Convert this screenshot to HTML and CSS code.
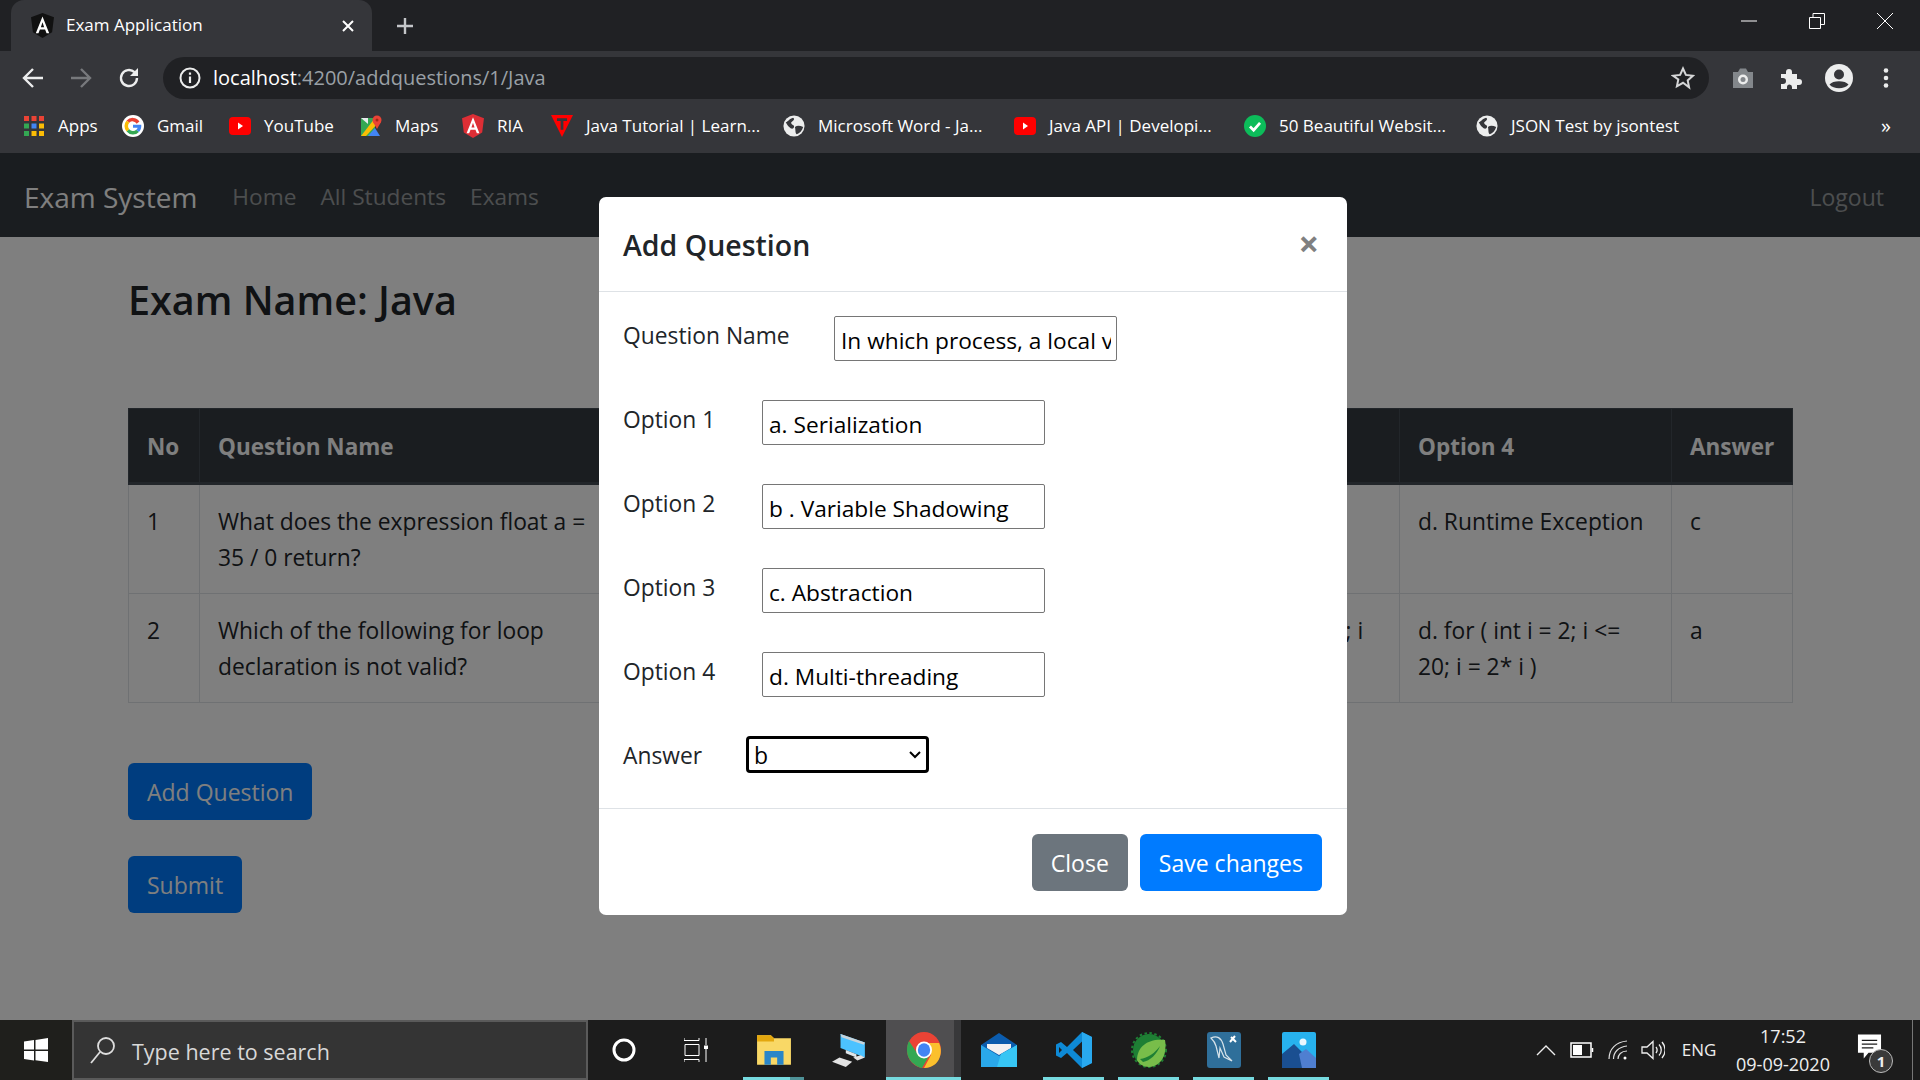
FILE: index.html
```html
<!DOCTYPE html>
<html lang="en">
<head>
  <meta charset="UTF-8">
  <title>Exam Application</title>
  <link rel="stylesheet" href="styles.css">
</head>
<body>

  <svg class="defs" width="0" height="0">
    <symbol id="globe" viewBox="0 0 24 24">
      <circle cx="12" cy="12" r="11.5" fill="#eceded"/>
      <path d="M3 8c3-1 4-4 8-5 2 1 1 3-1 4s-1 3 1 4 1 4-1 4-5-3-7-7zM13 13c3-2 6-1 9 0-1 4-4 7-7 8-2-2-1-4-2-8z" fill="#35363a"/>
    </symbol>
    <symbol id="youtube" viewBox="0 0 22 20">
      <rect x="0" y="1" width="22" height="18" rx="4" fill="#f00"/>
      <path d="M9 6.5l5 3.5-5 3.5z" fill="#fff"/>
    </symbol>
  </svg>

  <div class="browser">
    <div class="tabstrip">
      <div class="tab">
        <svg class="favicon" viewBox="0 0 24 26">
          <path d="M12 0L0 4.500l2 15.500L12 26l10-6 2-15.500z" fill="#111"/>
          <path d="M12 3.500L5 21h2.800l1.500-3.800h5.400l1.500 3.800H19zm-1.700 11.200L12 9.500l1.700 5.200z" fill="#fff"/>
        </svg>
        <span class="tab-title">Exam Application</span>
        <svg class="tab-close" viewBox="0 0 14 14"><path d="M2 2l10 10M12 2L2 12" stroke="#fff" stroke-width="2"/></svg>
      </div>
      <svg class="new-tab" viewBox="0 0 20 20"><path d="M10 2v16M2 10h16" stroke="#c4c6c9" stroke-width="2.4"/></svg>
      <div class="window-btns">
        <svg viewBox="0 0 16 16"><path d="M0 8h16" stroke="#fff" stroke-width="1"/></svg>
        <svg viewBox="0 0 16 16"><path d="M.5 4.500h11v11H.5zM4 4.500V.5h11.500v11H11.500" fill="none" stroke="#fff"/></svg>
        <svg viewBox="0 0 16 16"><path d="M0 0l16 16M16 0L0 16" stroke="#fff"/></svg>
      </div>
    </div>

    <div class="toolbar">
      <svg class="tool" viewBox="0 0 24 24"><path d="M22 12H4M12 3l-9 9 9 9" fill="none" stroke="#eceded" stroke-width="2.400"/></svg>
      <svg class="tool" viewBox="0 0 24 24"><path d="M2 12h18M12 3l9 9-9 9" fill="none" stroke="#77797c" stroke-width="2.400"/></svg>
      <svg class="tool" viewBox="0 0 24 24"><path d="M20 12a8 8 0 1 1-2.500-5.800" fill="none" stroke="#eceded" stroke-width="2.400"/><path d="M21 2v8h-8z" fill="#eceded"/></svg>
      <div class="omnibox">
        <svg class="info" viewBox="0 0 22 22"><circle cx="11" cy="11" r="9.500" fill="none" stroke="#eceded" stroke-width="2"/><path d="M11 9.500v6.500M11 5.500v2.300" stroke="#eceded" stroke-width="2.200"/></svg>
        <span class="url"><span class="host">localhost</span>:4200/addquestions/1/Java</span>
        <svg class="star" viewBox="0 0 24 24"><path d="M12 2.500l2.900 6.400 7 .8-5.200 4.700 1.400 6.900L12 16.800l-6.100 3.500 1.400-6.900L2.100 9.700l7-.8z" fill="none" stroke="#d5d6d7" stroke-width="2"/></svg>
      </div>
      <svg class="ext" viewBox="0 0 24 24"><path d="M2 6h5l2-3.500h6L17 6h5v16H2z" fill="#83878b"/><circle cx="12" cy="13.500" r="5" fill="#eceded"/><circle cx="12" cy="13.500" r="2.500" fill="#83878b"/></svg>
      <svg class="ext" viewBox="0 0 24 24"><path d="M3 8h5V6a3 3 0 0 1 6 0v2h5v5h2a3 3 0 0 1 0 6h-2v4h-5v-2a2.500 2.500 0 0 0-5 0v2H3v-5h2a3 3 0 0 0 0-6H3z" fill="#eceded"/></svg>
      <svg class="ext avatar" viewBox="0 0 28 28"><circle cx="14" cy="14" r="14" fill="#eceded"/><circle cx="14" cy="10.500" r="5" fill="#35363a"/><path d="M4.500 20.500c3-4.500 16-4.500 19 0-4 5-15 5-19 0z" fill="#35363a"/></svg>
      <svg class="ext dots" viewBox="0 0 24 24"><circle cx="12" cy="4.500" r="2.300" fill="#eceded"/><circle cx="12" cy="12" r="2.300" fill="#eceded"/><circle cx="12" cy="19.500" r="2.300" fill="#eceded"/></svg>
    </div>

    <div class="bookmarks">
      <div class="bookmark">
        <svg class="bm-icon" viewBox="0 0 20 24">
          <path d="M0 2h5v5H0z" fill="#ea4335"/><path d="M7.500 2h5v5h-5z" fill="#ea4335"/><path d="M15 2h5v5h-5z" fill="#ea4335"/>
          <path d="M0 9.500h5v5H0z" fill="#34a853"/><path d="M7.500 9.500h5v5h-5z" fill="#4285f4"/><path d="M15 9.500h5v5h-5z" fill="#fbbc05"/>
          <path d="M0 17h5v5H0z" fill="#34a853"/><path d="M7.500 17h5v5h-5z" fill="#fbbc05"/><path d="M15 17h5v5h-5z" fill="#fbbc05"/>
        </svg>
        <span>Apps</span>
      </div>
      <div class="bookmark">
        <svg class="bm-icon" viewBox="0 0 24 24">
          <circle cx="12" cy="12" r="12" fill="#fff"/>
          <path d="M19 7a9 9 0 0 0-14-1l3 2.500a5 5 0 0 1 8 1z" fill="#ea4335"/>
          <path d="M5 6a9 9 0 0 0 0 12l3-2.500a5 5 0 0 1 0-7z" fill="#fbbc05"/>
          <path d="M5 18a9 9 0 0 0 13.500.5L15.500 16A5 5 0 0 1 8 15.500z" fill="#34a853"/>
          <path d="M12 10.500h9c.4 3-.6 6-2.500 8L15.500 16c1-.7 1.300-1.500 1.500-2.200h-5z" fill="#4285f4"/>
        </svg>
        <span>Gmail</span>
      </div>
      <div class="bookmark"><svg class="bm-icon" viewBox="0 0 22 20"><use href="#youtube"/></svg><span>YouTube</span></div>
      <div class="bookmark">
        <svg class="bm-icon" viewBox="0 0 22 24">
          <path d="M1 4h14v18H1z" fill="#34a853"/>
          <path d="M1 22l14-18h4v4L6 22z" fill="#fbbc05"/>
          <path d="M8 22l7-8 5 8z" fill="#4285f4"/>
          <path d="M1 4h7v6z" fill="#e8eaed"/>
          <circle cx="17" cy="6" r="4.500" fill="#ea4335"/>
          <path d="M13 8l4 7 4-7z" fill="#ea4335"/>
          <circle cx="17" cy="6" r="1.500" fill="#a52714"/>
        </svg>
        <span>Maps</span>
      </div>
      <div class="bookmark">
        <svg class="bm-icon" viewBox="0 0 24 26">
          <path d="M12 0L0 4.500l2 15.500L12 26l10-6 2-15.500z" fill="#dd2e35"/>
          <path d="M12 3.500L5 21h2.800l1.500-3.800h5.400l1.500 3.800H19zm-1.700 11.200L12 9.500l1.700 5.200z" fill="#fff"/>
        </svg>
        <span>RIA</span>
      </div>
      <div class="bookmark">
        <svg class="bm-icon" viewBox="0 0 24 24">
          <path d="M0 0h24L12 24z" fill="#f00"/>
          <path d="M6.500 3.500h11v3h-4V16h-3V6.500h-4z" fill="#35363a"/>
        </svg>
        <span>Java Tutorial | Learn...</span>
      </div>
      <div class="bookmark"><svg class="bm-icon" viewBox="0 0 24 24"><use href="#globe"/></svg><span>Microsoft Word - Ja...</span></div>
      <div class="bookmark"><svg class="bm-icon" viewBox="0 0 22 20"><use href="#youtube"/></svg><span>Java API | Developi...</span></div>
      <div class="bookmark">
        <svg class="bm-icon" viewBox="0 0 24 24">
          <circle cx="12" cy="12" r="12" fill="#0cbc5a"/>
          <path d="M6.500 12.500l4 4 7-8" fill="none" stroke="#fff" stroke-width="3"/>
        </svg>
        <span>50 Beautiful Websit...</span>
      </div>
      <div class="bookmark"><svg class="bm-icon" viewBox="0 0 24 24"><use href="#globe"/></svg><span>JSON Test by jsontest</span></div>
      <div class="more-bookmarks">»</div>
    </div>
  </div>

  <div class="viewport">
    <nav class="navbar">
      <span class="brand">Exam System</span>
      <a class="nav-link">Home</a>
      <a class="nav-link">All Students</a>
      <a class="nav-link">Exams</a>
      <a class="nav-link logout">Logout</a>
    </nav>

    <main class="container">
      <h3 class="page-title">Exam Name: Java</h3>
      <table class="questions">
        <colgroup>
          <col class="col-no"><col class="col-name"><col class="col-opt1"><col class="col-opt2"><col class="col-opt3"><col class="col-opt4"><col class="col-answer">
        </colgroup>
        <thead>
          <tr><th>No</th><th>Question Name</th><th>Option 1</th><th>Option 2</th><th>Option 3</th><th>Option 4</th><th>Answer</th></tr>
        </thead>
        <tbody>
          <tr>
            <td>1</td>
            <td>What does the expression float a = 35 / 0 return?</td>
            <td>a. 0</td>
            <td>b. Not a Number</td>
            <td>c. Infinity</td>
            <td>d. Runtime Exception</td>
            <td>c</td>
          </tr>
          <tr>
            <td>2</td>
            <td>Which of the following for loop declaration is not valid?</td>
            <td>a. for ( int i = 99; i &gt;= 0; i / 9 )</td>
            <td>b. for ( int i = 7; i &lt;= 77; i += 7 )</td>
            <td>c. for ( int i = 20; i &gt;= 2; - -i )</td>
            <td>d. for ( int i = 2; i &lt;= 20; i = 2* i )</td>
            <td>a</td>
          </tr>
        </tbody>
      </table>
      <button class="btn btn-primary page-btn">Add Question</button>
      <button class="btn btn-primary page-btn">Submit</button>
    </main>

    <div class="backdrop"></div>

    <div class="modal">
      <div class="modal-header">
        <h5 class="modal-title">Add Question</h5>
        <span class="modal-close">×</span>
      </div>
      <form class="modal-body">
        <div class="form-row"><label class="label-name">Question Name</label><input type="text" value="In which process, a local variable has the same name as one of the instance variables?"></div>
        <div class="form-row"><label class="label-option">Option 1</label><input type="text" value="a. Serialization"></div>
        <div class="form-row"><label class="label-option">Option 2</label><input type="text" value="b . Variable Shadowing"></div>
        <div class="form-row"><label class="label-option">Option 3</label><input type="text" value="c. Abstraction"></div>
        <div class="form-row"><label class="label-option">Option 4</label><input type="text" value="d. Multi-threading"></div>
        <div class="form-row"><label class="label-answer">Answer</label>
          <select>
            <option>a</option>
            <option selected>b</option>
            <option>c</option>
            <option>d</option>
          </select>
        </div>
      </form>
      <div class="modal-footer">
        <button class="btn btn-secondary">Close</button>
        <button class="btn btn-primary">Save changes</button>
      </div>
    </div>
  </div>

  <footer class="taskbar">
    <div class="start">
      <svg viewBox="0 0 24 24"><path d="M0 3.500l10-1.400V11.500H0zM11.500 1.900L24 0v11.500H11.500zM0 13h10v9.400L0 21zM11.500 13H24v11l-12.500-1.800z" fill="#fff"/></svg>
    </div>
    <div class="search">
      <svg viewBox="0 0 26 28"><circle cx="16" cy="10" r="8" fill="none" stroke="#ddd" stroke-width="1.800"/><path d="M10 16L1 27" stroke="#ddd" stroke-width="1.800"/></svg>
      <span>Type here to search</span>
    </div>
    <div class="sys-btn"><svg class="cortana" viewBox="0 0 24 24"><circle cx="12" cy="12" r="10" fill="none" stroke="#fff" stroke-width="3"/></svg></div>
    <div class="sys-btn"><svg class="taskview" viewBox="0 0 24 24"><path d="M0 2.500h15M0 0v2.500M15 0v2.500M1 6.500h14v11H1zM0 21.500h15M0 21.500V24M15 21.500V24M22 0v7M22 11v13" fill="none" stroke="#fff" stroke-width="1"/><path d="M20 7.500h4v3.500h-4z" fill="#fff"/></svg></div>

    <div class="task-items">
      <div class="task open split">
        <svg viewBox="0 0 34 32">
          <path d="M1 2h13l3 3h16v25H1z" fill="#f9d866"/>
          <path d="M1 2h13l3 3v3H1z" fill="#e3a70e"/>
          <path d="M8 30V17h18v13h-6v-7h-6v7z" fill="#2a86c8"/>
        </svg>
      </div>
      <div class="task">
        <svg viewBox="0 0 34 34">
          <path d="M9 2l23 8v14L9 15z" fill="#4cc2ff"/>
          <path d="M9 2l23 8-1 2L10 5z" fill="#c7d3da"/>
          <path d="M14 17l10 4v3l-10-4z" fill="#dfe5e8"/>
          <path d="M1 28l7-4 12 4-6 5z" fill="#e3e3e3"/>
          <path d="M21 24l7-2 4 2-7 3z" fill="#e3e3e3"/>
        </svg>
      </div>
      <div class="task active">
        <svg viewBox="0 0 34 36">
          <ellipse cx="17" cy="18" rx="17" ry="18" fill="#ea4335"/>
          <path d="M2 9c-4 8-2 18 5 23 2 2 5 3.500 8 4l7-12H12z" fill="#34a853"/>
          <path d="M17 11h15c4 8 1 18-5 22-3 2-6 3-10 3l7-13z" fill="#fbc02d"/>
          <ellipse cx="17" cy="18" rx="8" ry="8.500" fill="#fff"/>
          <ellipse cx="17" cy="18" rx="6.200" ry="6.800" fill="#4285f4"/>
        </svg>
      </div>
      <div class="task">
        <svg viewBox="0 0 36 34">
          <path d="M18 0l18 12v22H0V12z" fill="#0b5cad"/>
          <path d="M6 11h24v4L18 22 6 15z" fill="#f2f2f2"/>
          <path d="M0 12l18 11 18-11v22H0z" fill="#2aa8ea"/>
          <path d="M36 12v22H16l4-13z" fill="#37c6f4"/>
        </svg>
      </div>
      <div class="task open">
        <svg viewBox="0 0 36 36">
          <path d="M26 0l10 5v26l-10 5L11 21l-6 5-5-2.500V12.500L5 10l6 5z" fill="#0e8ad6"/>
          <path d="M26 0l10 5v26l-10 5z" fill="#29a9ef"/>
          <path d="M26 9.500L17 18l9 8.500z" fill="#1e2023"/>
          <path d="M3 15v6l3-3z" fill="#1e2023"/>
        </svg>
      </div>
      <div class="task open">
        <svg viewBox="0 0 36 36">
          <circle cx="18" cy="18" r="16" fill="#1e7f34"/>
          <circle cx="18" cy="18" r="17" fill="none" stroke="#1e7f34" stroke-width="2" stroke-dasharray="2.500 2.500"/>
          <path d="M6 28C6 14 18 6 34 8c2 12-2 26-16 27-6 0-10-3-12-7z" fill="#78bd4a"/>
          <path d="M9 27c8-1 15-6 20-13-3 8-10 15-17 16z" fill="#1e7f34"/>
        </svg>
      </div>
      <div class="task open">
        <svg viewBox="0 0 34 36">
          <rect width="34" height="36" rx="3" fill="#2f6f9a"/>
          <path d="M4 6c6-3 10 0 12 6l3 11 6 6-8-4-4-9-1 10-3-12C8 10 6 8 4 6z" fill="none" stroke="#d7e3ea" stroke-width="1.200"/>
          <path d="M24 5l5 5M28 4l-5 6" stroke="#fff" stroke-width="2"/>
        </svg>
      </div>
      <div class="task open">
        <svg viewBox="0 0 34 36">
          <rect width="34" height="36" rx="2" fill="#27b2ee"/>
          <circle cx="21" cy="10" r="3.500" fill="#e9f7fe"/>
          <path d="M0 36V22l12-10 10 10 12 6v8z" fill="#1a4f91"/>
          <path d="M17 22l7-5 10 9v10H20z" fill="#4f7fd1"/>
        </svg>
      </div>
    </div>

    <div class="tray">
      <div class="tray-cell caret"><svg viewBox="0 0 20 12"><path d="M1 11l9-9 9 9" fill="none" stroke="#eee" stroke-width="1.400"/></svg></div>
      <div class="tray-cell battery"><svg viewBox="0 0 24 16"><path d="M1 1h20v14H1z" fill="none" stroke="#fff" stroke-width="1.500"/><path d="M3 3h9v10H3z" fill="#fff"/><path d="M22.500 6v4" stroke="#fff" stroke-width="1.500"/></svg></div>
      <div class="tray-cell wifi"><svg viewBox="0 0 20 20"><path d="M1 19C1 9 8 2 19 1M5.500 19c0-7 5-12 13.500-13M10 19c0-4 3-8 9-8" fill="none" stroke="#ddd" stroke-width="1.200"/><circle cx="17" cy="18" r="1.500" fill="#fff"/></svg></div>
      <div class="tray-cell volume"><svg viewBox="0 0 24 20"><path d="M1 7h5l6-5.500v17L6 13H1z" fill="none" stroke="#eee" stroke-width="1.300"/><path d="M15 7c1.500 2 1.500 4 0 6M18 4.500c3 3 3 8 0 11M21 2c4 5 4 11 0 16" fill="none" stroke="#eee" stroke-width="1.300"/></svg></div>
      <div class="tray-cell lang">ENG</div>
      <div class="clock"><span>17:52</span><span>09-09-2020</span></div>
      <div class="notify">
        <svg viewBox="0 0 26 26"><path d="M1 0h24v19H12l-5 6v-6H1z" fill="#fff"/><path d="M5 6h16M5 10h16M5 14h12" stroke="#1c1c1c" stroke-width="1.300"/></svg>
        <span class="notify-count">1</span>
      </div>
      <div class="show-desktop"></div>
    </div>
  </footer>

</body>
</html>
```

FILE: styles.css
```css
* {
  box-sizing: border-box;
}

html, body {
  height: 100%;
}

body {
  margin: 0;
  width: 1920px;
  height: 1080px;
  display: flex;
  flex-direction: column;
  overflow: hidden;
  font-family: "Open Sans", "Noto Sans", sans-serif;
  font-size: 22.8px;
  line-height: 36px;
  color: #212529;
  background-color: #fff;
}

.defs {
  position: absolute;
}

svg {
  display: block;
}

/* browser window */

.browser {
  height: 153px;
  flex: none;
  background-color: #35363a;
  color: #fff;
}

.tabstrip {
  height: 51px;
  display: flex;
  align-items: center;
  background-color: #202124;
}

.tab {
  width: 361px;
  height: 51px;
  margin-left: 11px;
  padding: 0 17px 0 20px;
  display: flex;
  align-items: center;
  background-color: #35363a;
  border-radius: 13px 13px 0 0;
}

.favicon {
  width: 23px;
  height: 25px;
}

.tab-title {
  margin-left: 12px;
  margin-top: -2px;
  flex: 1;
  font-size: 17px;
  line-height: 24px;
}

.tab-close {
  width: 14px;
  height: 14px;
}

.new-tab {
  width: 20px;
  height: 20px;
  margin-left: 23px;
}

.window-btns {
  margin-left: auto;
  margin-top: -10px;
  padding-right: 27px;
  display: flex;
  gap: 52px;
}

.window-btns svg {
  width: 16px;
  height: 16px;
}

.toolbar {
  height: 49px;
  padding: 6px 0 1px 21px;
  display: flex;
  align-items: center;
}

.tool {
  width: 24px;
  height: 24px;
  margin-right: 24px;
}

.omnibox {
  width: 1546px;
  height: 42px;
  margin-left: -2px;
  padding: 0 14px 0 16px;
  display: flex;
  align-items: center;
  background-color: #202124;
  border-radius: 21px;
}

.info {
  width: 22px;
  height: 22px;
}

.url {
  margin-left: 12px;
  flex: 1;
  font-size: 20px;
  line-height: 28px;
  color: #9aa0a6;
}

.host {
  color: #fff;
}

.star {
  width: 24px;
  height: 24px;
}

.ext {
  width: 24px;
  height: 24px;
  margin-left: 23px;
}

.omnibox + .ext {
  margin-left: 22px;
}

.avatar {
  width: 28px;
  height: 28px;
}

.dots {
  margin-left: 21px;
}

.bookmarks {
  height: 53px;
  padding-left: 23px;
  padding-bottom: 2px;
  display: grid;
  grid-template-columns: 99px 107px 131px 102px 89px 232px 231px 230px 232px 204px 1fr;
  align-items: center;
  font-size: 17px;
  line-height: 24px;
}

.bookmark {
  display: flex;
  align-items: center;
  gap: 13px;
  white-space: nowrap;
}

.bm-icon {
  width: 22px;
  height: 24px;
  flex: none;
}

.more-bookmarks {
  padding-right: 29px;
  text-align: right;
  font-size: 20px;
}

/* app page */

.viewport {
  position: relative;
  flex: 1;
  overflow: hidden;
}

.navbar {
  height: 84px;
  padding: 4px 36px 0 24px;
  display: flex;
  align-items: center;
  gap: 24px;
  background-color: #343a40;
}

.brand {
  margin-right: 11px;
  font-size: 28px;
  color: #fff;
}

.nav-link {
  font-size: 22.7px;
  color: rgba(255, 255, 255, 0.5);
}

.logout {
  margin-left: auto;
  font-size: 23px;
}

.container {
  padding: 32px 128px 0 128px;
}

.page-title {
  width: fit-content;
  margin: 0 0 76px;
  font-size: 39.5px;
  line-height: 63px;
  font-weight: 600;
}

.questions {
  width: 1664px;
  margin-bottom: 60px;
  table-layout: fixed;
  border-collapse: collapse;
}

.col-no { width: 71px; }
.col-name { width: 420px; }
.col-opt1 { width: 260px; }
.col-opt2 { width: 285px; }
.col-opt3 { width: 235px; }
.col-opt4 { width: 272px; }
.col-answer { width: 121px; }

.questions th,
.questions td {
  padding: 18px;
  vertical-align: top;
  text-align: left;
  border: 1px solid #dee2e6;
}

.questions td {
  padding-top: 19px;
  padding-bottom: 17px;
}

.questions th {
  padding: 20px 18px 17px;
  font-size: 22.5px;
  font-weight: 700;
  color: #fff;
  background-color: #343a40;
  border-color: #454d55;
  border-bottom-width: 3px;
}

.btn {
  height: 57px;
  padding: 0 19px;
  display: inline-block;
  font-family: inherit;
  font-size: 23px;
  line-height: 36px;
  color: #fff;
  border: none;
  border-radius: 6px;
}

.btn-primary {
  background-color: #007bff;
}

.btn-secondary {
  background-color: #6c757d;
}

.page-btn {
  display: block;
  margin-bottom: 36px;
}

.backdrop {
  position: absolute;
  inset: 0;
  background-color: #000;
  opacity: 0.5;
}

/* modal */

.modal {
  position: absolute;
  top: 44px;
  left: 599px;
  width: 748px;
  height: 718px;
  display: flex;
  flex-direction: column;
  background-color: #fff;
  border-radius: 7px;
}

.modal-header {
  height: 95px;
  flex: none;
  padding: 0 28px 0 24px;
  display: flex;
  align-items: center;
  justify-content: space-between;
  border-bottom: 1px solid #dee2e6;
}

.modal-title {
  margin: 2px 0 0;
  font-size: 28.5px;
  line-height: 42px;
  font-weight: 600;
}

.modal-close {
  margin-top: -1px;
  font-size: 36px;
  font-weight: 700;
  color: #808080;
}

.modal-body {
  flex: 1;
  min-height: 0;
  padding: 24px 24px 0;
}

.form-row {
  height: 45px;
  margin-bottom: 39px;
  display: flex;
}

.form-row label {
  margin-top: 2px;
}

.label-name { width: 211px; }
.label-option { width: 139px; }
.label-answer { width: 123px; }

.form-row input {
  width: 283px;
  height: 45px;
  padding: 4px 5px 0 6px;
  font-family: inherit;
  font-size: 22.7px;
  color: #000;
  border: 1px solid #767676;
  border-radius: 2px;
  outline: none;
}

.form-row select {
  width: 183px;
  height: 37px;
  padding-left: 5px;
  appearance: none;
  font-family: inherit;
  font-size: 23px;
  color: #000;
  background: #fff url("data:image/svg+xml,%3Csvg xmlns='http://www.w3.org/2000/svg' width='12' height='8'%3E%3Cpath d='M1 1l5 5 5-5' fill='none' stroke='%23000' stroke-width='2'/%3E%3C/svg%3E") no-repeat right 5px center;
  border: 3px solid #000;
  border-radius: 4px;
  outline: none;
}

.modal-footer {
  height: 107px;
  flex: none;
  padding: 25px 25px 0 0;
  display: flex;
  justify-content: flex-end;
  align-items: flex-start;
  gap: 12px;
  border-top: 1px solid #dee2e6;
}

/* taskbar */

.taskbar {
  height: 60px;
  flex: none;
  display: flex;
  align-items: stretch;
  background-color: #1c1c1c;
  color: #fff;
}

.start {
  width: 72px;
  display: flex;
  align-items: center;
  justify-content: center;
  background-color: #1f1f1c;
}

.start svg {
  width: 24px;
  height: 24px;
}

.search {
  width: 516px;
  padding-left: 16px;
  display: flex;
  align-items: center;
  gap: 16px;
  background-color: #343434;
  border: 2px solid #5a5a5a;
  font-size: 21.5px;
  color: #d8d8d8;
}

.search svg {
  width: 26px;
  height: 28px;
}

.search span {
  padding-top: 3px;
}

.sys-btn {
  width: 72px;
  display: flex;
  align-items: center;
  justify-content: center;
}

.cortana {
  width: 24px;
  height: 24px;
}

.taskview {
  width: 24px;
  height: 24px;
}

.task-items {
  margin-left: 4px;
  display: flex;
}

.task {
  position: relative;
  width: 75px;
  display: flex;
  align-items: center;
  justify-content: center;
}

.task svg {
  width: 36px;
  height: 36px;
}

.task.open::after,
.task.active::after {
  content: "";
  position: absolute;
  bottom: 0;
  left: 7px;
  right: 7px;
  height: 3px;
  background-color: #76dadf;
}

.task.split::after {
  background: linear-gradient(to right, #76dadf 77%, #4f9298 77%);
}

.task.active {
  padding-left: 7px;
  background-color: #4f4e50;
  border-right: 7px solid #38383a;
}

.task.active::after {
  left: 0;
  right: -7px;
}

.tray {
  margin-left: auto;
  display: flex;
  align-items: stretch;
}

.tray-cell {
  width: 36px;
  display: flex;
  align-items: center;
  justify-content: center;
}

.caret svg { width: 20px; height: 12px; }
.battery svg { width: 24px; height: 16px; }
.wifi svg { width: 20px; height: 20px; }
.volume svg { width: 24px; height: 20px; }

.volume {
  width: 34px;
}

.lang {
  width: 58px;
  font-size: 17px;
  color: #eee;
}

.clock {
  width: 110px;
  display: flex;
  flex-direction: column;
  align-items: center;
  justify-content: center;
  font-size: 18px;
  line-height: 28px;
  color: #eee;
}

.notify {
  position: relative;
  width: 64px;
  display: flex;
  align-items: center;
  justify-content: center;
}

.notify svg {
  width: 25px;
  height: 26px;
  margin-top: -6px;
  margin-right: 2px;
}

.notify-count {
  position: absolute;
  top: 29px;
  left: 31px;
  width: 24px;
  height: 24px;
  display: flex;
  align-items: center;
  justify-content: center;
  font-size: 15px;
  font-weight: 700;
  color: #eee;
  background-color: #3a3a3a;
  border: 1px solid #bbb;
  border-radius: 50%;
}

.show-desktop {
  width: 11px;
  margin-right: 7px;
  border-right: 1px solid #777;
}
```
